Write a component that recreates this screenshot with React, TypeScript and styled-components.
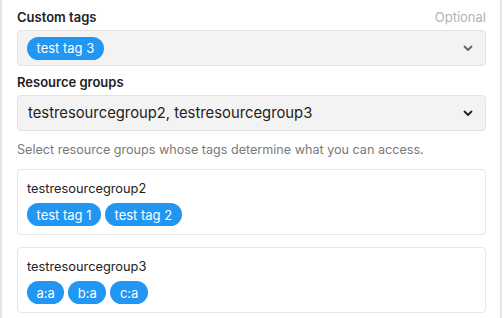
import React from "react";
import styled, { createGlobalStyle } from "styled-components";

const Global = createGlobalStyle`
  html, body { margin: 0; padding: 0; background: #fff; }
  body { font-family: Inter, "Noto Sans", sans-serif; color: #1f1f1f; }
  * { box-sizing: border-box; }
`;

const Frame = styled.div`
  width: 502px;
  height: 318px;
  border-left: 2px solid #e6e6e6;
  border-right: 2px solid #e6e6e6;
  padding: 8px 14px 0 15px;
  display: flex;
  flex-direction: column;
  overflow: hidden;
`;

const LabelRow = styled.div<{ $top?: number }>`
  display: flex;
  justify-content: space-between;
  align-items: baseline;
  height: 18px;
  margin-bottom: 4px;
  margin-top: ${(p) => p.$top ?? 0}px;
`;

const Label = styled.span`
  font-size: 13px;
  font-weight: 600;
  color: #222;
  line-height: 18px;
`;

const Optional = styled.span`
  font-size: 13px;
  color: #b4b4b4;
  line-height: 18px;
`;

const Select = styled.div`
  height: 36px;
  background: #f3f3f3;
  border: 1px solid #e2e2e2;
  border-radius: 4px;
  display: flex;
  align-items: center;
  padding: 0 12px 0 9px;
  gap: 4px;
`;

const SelectValue = styled.span`
  flex: 1;
  font-size: 14.8px;
  color: #222;
  padding-left: 1px;
`;

const Spacer = styled.span`
  flex: 1;
`;

const Chip = styled.span`
  display: inline-flex;
  align-items: center;
  height: 23px;
  padding: 0 9.5px;
  border-radius: 12px;
  background: #2196f3;
  color: #fff;
  font-size: 13px;
  white-space: nowrap;
`;

const Help = styled.div`
  font-size: 12.6px;
  color: #7a7a7a;
  margin-top: 10px;
  line-height: 18px;
`;

const Card = styled.div<{ $top: number }>`
  margin-top: ${(p) => p.$top}px;
  border: 1px solid #e6e6e6;
  border-radius: 4px;
  padding: 10px 9px 8px;
  display: flex;
  flex-direction: column;
  gap: 6px;
`;

const CardTitle = styled.div`
  font-size: 12.8px;
  color: #222;
  line-height: 17px;
`;

const ChipRow = styled.div`
  display: flex;
  gap: 4px;
`;

const Chevron = ({ color }: { color: string }) => (
  <svg width="10" height="7" viewBox="0 0 10 7">
    <polyline
      points="1.5,1.5 5,5 8.5,1.5"
      fill="none"
      stroke={color}
      strokeWidth="1.8"
      strokeLinecap="round"
      strokeLinejoin="round"
    />
  </svg>
);

const groups = [
  { name: "testresourcegroup2", tags: ["test tag 1", "test tag 2"] },
  { name: "testresourcegroup3", tags: ["a:a", "b:a", "c:a"] },
];

export default function App() {
  return (
    <>
      <Global />
      <Frame>
        <LabelRow>
          <Label>Custom tags</Label>
          <Optional>Optional</Optional>
        </LabelRow>
        <Select>
          <Chip>test tag 3</Chip>
          <Spacer />
          <Chevron color="#666" />
        </Select>
        <LabelRow $top={7}>
          <Label>Resource groups</Label>
        </LabelRow>
        <Select>
          <SelectValue>testresourcegroup2, testresourcegroup3</SelectValue>
          <Chevron color="#222" />
        </Select>
        <Help>Select resource groups whose tags determine what you can access.</Help>
        {groups.map((g, i) => (
          <Card key={g.name} $top={i === 0 ? 10 : 12}>
            <CardTitle>{g.name}</CardTitle>
            <ChipRow>
              {g.tags.map((t) => (
                <Chip key={t}>{t}</Chip>
              ))}
            </ChipRow>
          </Card>
        ))}
      </Frame>
    </>
  );
}
